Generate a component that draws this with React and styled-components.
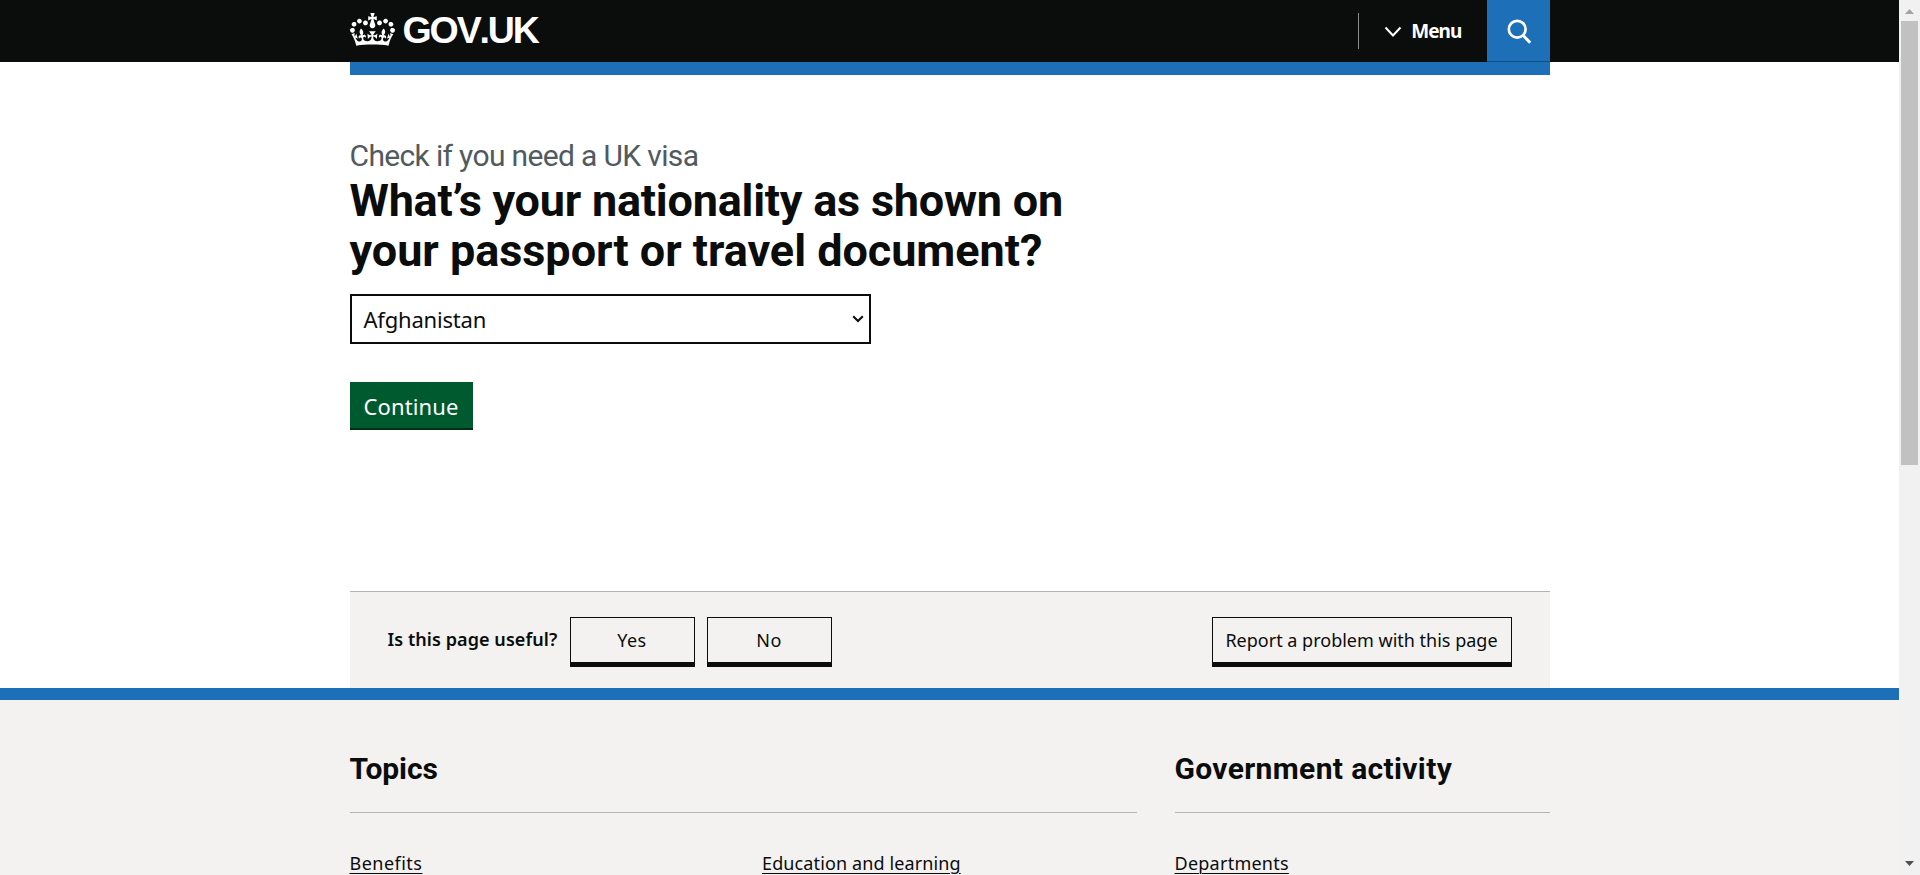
import React from 'react';
import styled, { createGlobalStyle } from 'styled-components';

const ink = '#0b0c0c';
const blue = '#1d70b8';
const grey = '#f3f2f1';
const body = '"Noto Sans", "Open Sans", sans-serif';
const display = 'Roboto, "Liberation Sans", sans-serif';

const GlobalStyle = createGlobalStyle`
  * { box-sizing: border-box; }
  body {
    margin: 0;
    overflow: hidden;
    background: #fff;
    color: ${ink};
    font-family: ${body};
  }
`;

const Shell = styled.div`
  display: flex;
  width: 100%;
  height: 875px;
  overflow: hidden;
`;

const Page = styled.div`
  flex: 1;
  min-width: 0;
  display: flex;
  flex-direction: column;
  overflow: hidden;
`;

const Container = styled.div`
  width: 1200px;
  margin: 0 auto;
  flex: none;
`;

const Header = styled.header`
  flex: none;
  height: 62px;
  background: ${ink};
`;

const HeaderRow = styled(Container)`
  display: flex;
  align-items: flex-start;
  height: 62px;
`;

const Logo = styled.a`
  display: flex;
  align-items: flex-start;
  color: #fff;
  padding-top: 13px;
  margin-right: auto;
`;

const Crown = styled.svg`
  display: block;
  width: 45px;
  height: 33px;
  fill: currentColor;
`;

const Wordmark = styled.span`
  margin: -5px 0 0 8px;
  font: 700 37.5px/44px "Liberation Sans", Arial, sans-serif;
  font-kerning: none;
  letter-spacing: -2.1px;
`;

const MenuButton = styled.button`
  display: flex;
  align-items: center;
  height: 36px;
  margin-top: 13px;
  padding: 0 25px 0 25px;
  border: 0;
  border-left: 1px solid #8a8d8f;
  background: none;
  color: #fff;
  font: 700 19px/36px ${body};
  letter-spacing: -0.9px;
`;

const Chevron = styled.svg`
  width: 18px;
  height: 12px;
  margin: 2px 9px 0 0;
`;

const SearchButton = styled.button`
  width: 63px;
  height: 62px;
  padding: 3px 0 0 2px;
  border: 0;
  border-bottom: 1px solid #144e81;
  background: ${blue};
  display: flex;
  align-items: center;
  justify-content: center;
`;

const BlueBar = styled(Container)`
  height: 13px;
  background: ${blue};
`;

const Main = styled(Container)`
  display: flex;
  flex-direction: column;
  align-items: flex-start;
  height: 516px;
  padding-top: 61px;
`;

const Caption = styled.span`
  color: #505a5f;
  font: 400 30px/40px ${display};
  letter-spacing: -0.65px;
`;

const Question = styled.h1`
  margin: 0;
  width: 780px;
  font: 700 45px/50px ${display};
`;

const QuestionLine = styled.span`
  display: block;
  letter-spacing: ${(p) => p.$spacing}px;
`;

const SelectBox = styled.div`
  display: flex;
  align-items: center;
  justify-content: space-between;
  width: 521px;
  height: 50px;
  margin-top: 18px;
  padding: 0 5px 0 12px;
  border: 2px solid ${ink};
  font: 400 22px/46px ${body};
  letter-spacing: -0.2px;
`;

const Continue = styled.button`
  width: 123px;
  height: 46px;
  margin-top: 38px;
  padding: 2px 0 0;
  border: 0;
  background: #005a30;
  box-shadow: 0 2px 0 #002d18;
  color: #fff;
  font: 400 22px/44px ${body};
  letter-spacing: 0.13px;
`;

const Feedback = styled(Container)`
  display: flex;
  align-items: flex-start;
  height: 97px;
  padding: 25px 38px 0 38px;
  border-top: 1px solid #b1b4b6;
  background: ${grey};
`;

const FeedbackLabel = styled.span`
  width: 182px;
  font: 600 18px/44px ${body};
  letter-spacing: 0.07px;
`;

const FeedbackButton = styled.button`
  width: ${(p) => p.$width}px;
  height: 46px;
  margin-right: ${(p) => (p.$last ? 0 : 12)}px;
  margin-left: ${(p) => (p.$last ? 'auto' : 0)};
  padding: 1px 0 0;
  border: 1px solid ${ink};
  background: ${grey};
  box-shadow: 0 4px 0 ${ink};
  color: ${ink};
  white-space: nowrap;
  font: 400 18px/43px ${body};
  letter-spacing: ${(p) => p.$spacing || 0}px;
`;

const Footer = styled.footer`
  flex: none;
  height: 220px;
  border-top: 12px solid ${blue};
  background: ${grey};
  padding-top: 49px;
`;

const FooterColumns = styled(Container)`
  display: grid;
  grid-template-columns: 787px 375px;
  column-gap: 38px;
`;

const FooterHeading = styled.h2`
  margin: 0 0 37px;
  height: 64px;
  border-bottom: 1px solid #b1b4b6;
  font: 700 30px/40px ${display};
  letter-spacing: ${(p) => p.$spacing}px;
`;

const LinkGrid = styled.div`
  display: grid;
  grid-template-columns: repeat(${(p) => p.$columns}, 1fr);
  column-gap: 38px;
`;

const FooterLink = styled.a`
  justify-self: start;
  white-space: nowrap;
  color: ${ink};
  font: 400 18px/26px ${body};
  letter-spacing: ${(p) => p.$spacing}px;
  text-decoration: underline;
  text-decoration-thickness: 1px;
  text-underline-offset: 3px;
`;

const ScrollTrack = styled.div`
  flex: none;
  width: 21px;
  height: 875px;
  padding: 0 2px;
  background: #f1f1f1;
  display: flex;
  flex-direction: column;
  align-items: center;
`;

const ScrollThumb = styled.div`
  width: 17px;
  height: 444px;
  background: #c1c1c1;
`;

const ScrollArrow = styled.svg`
  flex: none;
  width: 17px;
  height: 21px;
  margin-top: ${(p) => (p.$end ? 'auto' : 0)};
`;

const crownPath =
  'M25 30.2c3.5 1.5 7.7-.2 9.1-3.7 1.5-3.6-.2-7.8-3.9-9.2-3.6-1.4-7.6.3-9.1 3.9-1.4 3.5.3 7.5 3.9 9zM9 39.5c3.6 1.5 7.8-.2 9.2-3.7 1.5-3.6-.2-7.8-3.9-9.1-3.6-1.5-7.6.2-9.1 3.8-1.4 3.5.3 7.5 3.8 9zM4.4 57.2c3.5 1.5 7.7-.2 9.1-3.8 1.5-3.6-.2-7.7-3.9-9.1-3.5-1.5-7.6.3-9.1 3.8-1.4 3.5.3 7.6 3.9 9.1zm38.3-21.4c3.5 1.5 7.7-.2 9.1-3.8 1.5-3.6-.2-7.7-3.9-9.1-3.6-1.5-7.6.3-9.1 3.8-1.3 3.6.4 7.7 3.9 9.1zm64.4-5.6c-3.6 1.5-7.8-.2-9.1-3.7-1.5-3.6.2-7.8 3.8-9.2 3.6-1.4 7.7.3 9.2 3.9 1.3 3.5-.4 7.5-3.9 9zm15.9 9.3c-3.6 1.5-7.7-.2-9.1-3.7-1.5-3.6.2-7.8 3.7-9.1 3.6-1.5 7.7.2 9.2 3.8 1.5 3.5-.3 7.5-3.8 9zm4.7 17.7c-3.6 1.5-7.8-.2-9.2-3.8-1.5-3.6.2-7.7 3.9-9.1 3.6-1.5 7.7.3 9.2 3.8 1.3 3.5-.4 7.6-3.9 9.1zM89.3 35.8c-3.6 1.5-7.8-.2-9.2-3.8-1.4-3.6.2-7.7 3.9-9.1 3.6-1.5 7.7.3 9.2 3.8 1.4 3.6-.3 7.7-3.9 9.1zM69.7 17.7l8.9 4.7V9.3l-8.9 2.8c-.2-.3-.5-.6-.9-.9L72.4 0H59.6l3.5 11.2c-.3.3-.6.5-.9.9l-8.8-2.8v13.1l8.8-4.7c.3.3.6.7.9.9l-5 15.4v.1c-.2.8-.4 1.6-.4 2.4 0 4.1 3.1 7.5 7 8.1h.2c.3 0 .7.1 1 .1.4 0 .7 0 1-.1h.2c4-.6 7.1-4.1 7.1-8.1 0-.8-.1-1.7-.4-2.4V34l-5.1-15.4c.4-.2.7-.6 1-.9zM66 92.8c16.9 0 32.8 1.1 47.1 3.2 4-16.9 8.9-26.7 14-33.5l-9.6-3.4c1 4.9 1.1 7.2 0 10.2-1.5-1.4-3-4.3-4.2-8.7L108.6 76c2.8-2 5-3.2 7.5-3.3-4.4 9.4-10 11.9-13.6 11.2-4.3-.8-6.3-4.6-5.6-7.9 1-4.7 5.7-5.9 8-.5 4.3-8.7-3-11.4-7.6-8.8 7.1-7.2 7.9-13.5 2.1-21.1-8 6.1-8.1 12.3-4.5 20.8-4.7-5.4-12.1-2.5-9.5 6.2 3.4-5.2 7.9-2 7.2 3.1-.6 4.3-6.4 7.8-13.5 7.2-10.3-.9-10.9-8-11.2-13.8 2.5-.5 7.1 1.8 11 7.3L80.2 60c-4.1 4.4-8 5.3-12.3 5.4 1.4-4.4 8-11.6 8-11.6H55.5s6.4 7.2 7.9 11.6c-4.2-.1-8-1-12.3-5.4l1.4 16.4c3.9-5.5 8.5-7.7 10.9-7.3-.3 5.8-.9 12.8-11.1 13.8-7.2.6-12.9-2.9-13.5-7.2-.7-5 3.8-8.3 7.1-3.1 2.7-8.7-4.6-11.6-9.4-6.2 3.7-8.5 3.6-14.7-4.6-20.8-5.8 7.6-5 13.9 2.2 21.1-4.7-2.6-11.9.1-7.7 8.8 2.3-5.5 7.1-4.2 8.1.5.7 3.3-1.3 7.1-5.7 7.9-3.5.7-9-1.8-13.5-11.2 2.5.1 4.7 1.3 7.5 3.3l-4.7-15.4c-1.2 4.4-2.7 7.2-4.3 8.7-1.1-3-.9-5.3 0-10.2l-9.5 3.4c5 6.9 9.9 16.7 14 33.5 14.8-2.1 30.8-3.2 47.7-3.2z';

export default function App() {
  return (
    <Shell>
      <GlobalStyle />
      <Page>
        <Header>
          <HeaderRow>
            <Logo>
              <Crown viewBox="0 0 132 97">
                <path fillRule="evenodd" d={crownPath} />
              </Crown>
              <Wordmark>GOV.UK</Wordmark>
            </Logo>
            <MenuButton>
              <Chevron viewBox="0 0 18 12">
                <path d="M1.5 1.500 9 9.500l7.500-8" fill="none" stroke="#fff" strokeWidth="2" />
              </Chevron>
              Menu
            </MenuButton>
            <SearchButton aria-label="Search">
              <svg width="25" height="26" viewBox="0 0 25 26" fill="none" stroke="#fff" strokeWidth="2.7">
                <circle cx="10.2" cy="10.2" r="8.4" />
                <path d="m16 16.3 7.2 7.5" strokeWidth="3" />
              </svg>
            </SearchButton>
          </HeaderRow>
        </Header>
        <BlueBar />
        <Main as="main">
          <Caption>Check if you need a UK visa</Caption>
          <Question>
            <QuestionLine $spacing={-0.23}>What’s your nationality as shown on</QuestionLine>
            <QuestionLine $spacing={-0.04}>your passport or travel document?</QuestionLine>
          </Question>
          <SelectBox>
            Afghanistan
            <svg width="12" height="8" viewBox="0 0 12 8">
              <path d="m1.2 1.2 4.8 4.8 4.8-4.8" fill="none" stroke={ink} strokeWidth="2" />
            </svg>
          </SelectBox>
          <Continue>Continue</Continue>
        </Main>
        <Feedback>
          <FeedbackLabel>Is this page useful?</FeedbackLabel>
          <FeedbackButton $width={125} $spacing={0.4}>Yes</FeedbackButton>
          <FeedbackButton $width={125} $spacing={0.4}>No</FeedbackButton>
          <FeedbackButton $width={300} $last>Report a problem with this page</FeedbackButton>
        </Feedback>
        <Footer>
          <FooterColumns>
            <section>
              <FooterHeading $spacing={-0.1}>Topics</FooterHeading>
              <LinkGrid $columns={2}>
                <FooterLink $spacing={0.48}>Benefits</FooterLink>
                <FooterLink $spacing={0.12}>Education and learning</FooterLink>
              </LinkGrid>
            </section>
            <section>
              <FooterHeading $spacing={0.35}>Government activity</FooterHeading>
              <LinkGrid $columns={1}>
                <FooterLink $spacing={0.25}>Departments</FooterLink>
              </LinkGrid>
            </section>
          </FooterColumns>
        </Footer>
      </Page>
      <ScrollTrack>
        <ScrollArrow viewBox="0 0 17 21">
          <path d="M4 14h9L8.5 9z" fill="#a3a3a3" />
        </ScrollArrow>
        <ScrollThumb />
        <ScrollArrow $end viewBox="0 0 17 21">
          <path d="M4 7h9l-4.500 5z" fill="#505050" />
        </ScrollArrow>
      </ScrollTrack>
    </Shell>
  );
}
